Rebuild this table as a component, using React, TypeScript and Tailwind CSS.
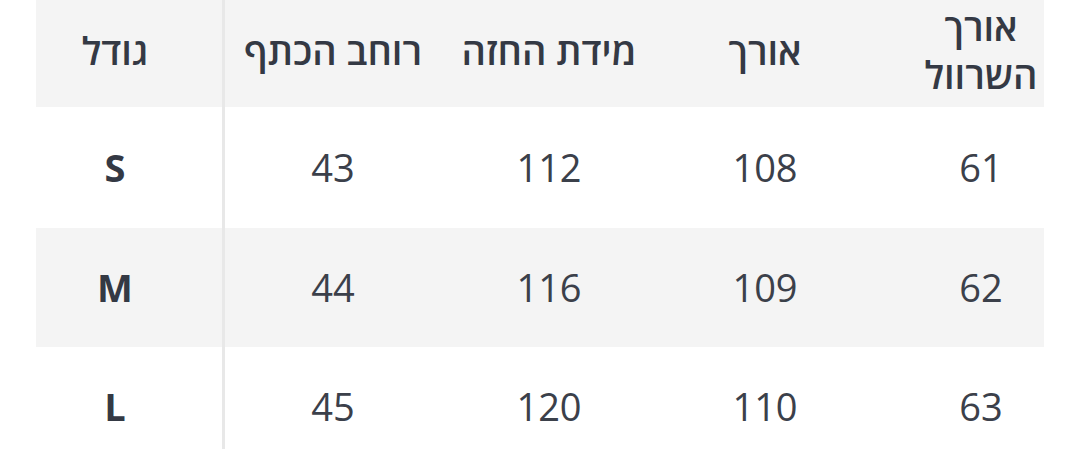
const headers = ["גודל", "רוחב הכתף", "מידת החזה", "אורך", "אורך השרוול"];

const rows = [
  { size: "S", values: ["43", "112", "108", "61"] },
  { size: "M", values: ["44", "116", "109", "62"] },
  { size: "L", values: ["45", "120", "110", "63"] },
];

const grid = "grid grid-cols-[189px_216px_216px_216px_216px] w-[1053px]";

export default function App() {
  return (
    <div
      className="w-[1080px] h-[449px] bg-white overflow-hidden text-[#343944]"
      style={{ fontFamily: '"Open Sans", "Noto Sans", sans-serif' }}
    >
      <div className="ml-[36px] w-[1008px] overflow-hidden">
        {/* Header (scrolled slightly off the top) */}
        <div className={`${grid} h-[115px] -mt-[8px] bg-[#f4f4f4]`}>
          {headers.map((h, i) => (
            <div
              key={h}
              dir="rtl"
              className={`flex items-center justify-center text-center text-[38px] leading-[48px] font-semibold ${
                i === 0 ? "pr-[28px] border-r-[3px] border-[#e8e8e8]" : "px-4"
              }`}
            >
              {h}
            </div>
          ))}
        </div>

        {/* Body */}
        {rows.map((row, r) => (
          <div
            key={row.size}
            className={`${grid} ${r === 0 ? "h-[121px]" : "h-[119px]"} ${r % 2 === 1 ? "bg-[#f4f4f4]" : "bg-white"}`}
          >
            <div className="flex items-center justify-center pr-[28px] border-r-[3px] border-[#e8e8e8] text-[38px] font-bold">
              {row.size}
            </div>
            {row.values.map((v, i) => (
              <div key={i} className="flex items-center justify-center text-[38px] font-normal text-[#3b404a]">
                {v}
              </div>
            ))}
          </div>
        ))}
      </div>
    </div>
  );
}
